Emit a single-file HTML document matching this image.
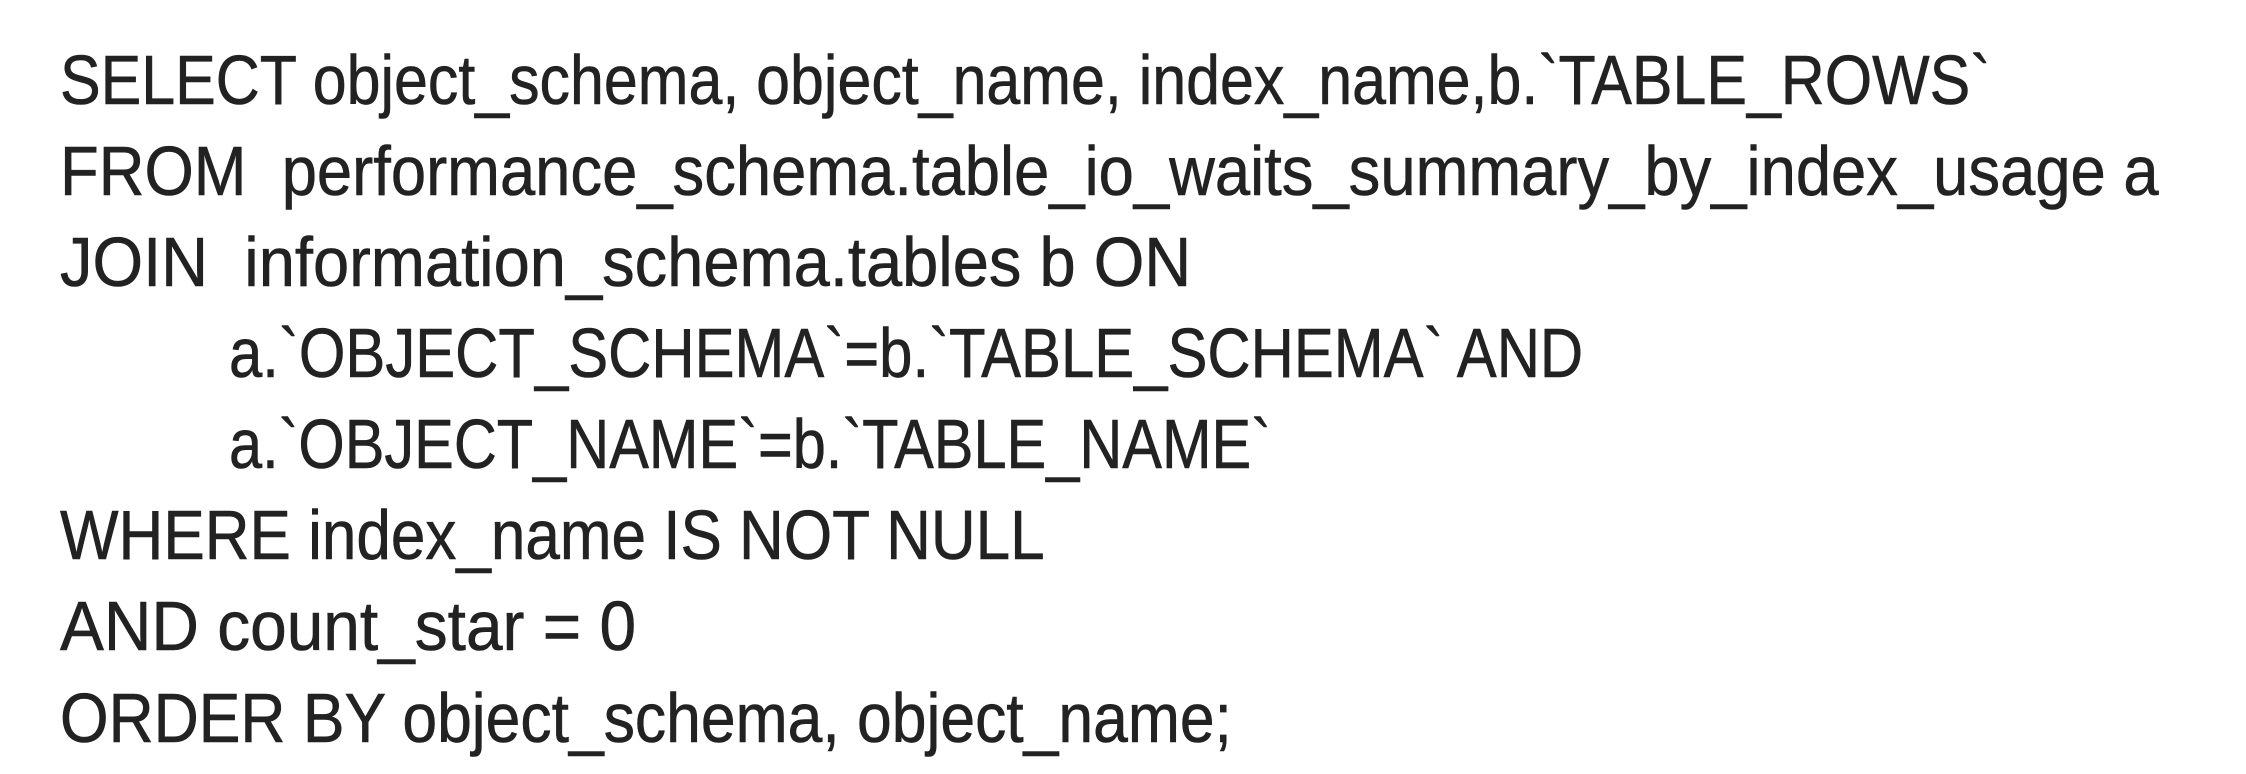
<!DOCTYPE html>
<html><head><meta charset="utf-8"><style>
html,body{margin:0;padding:0;background:#fff;}
body{width:2246px;height:774px;overflow:hidden;position:relative;font-family:"Liberation Sans",sans-serif;color:#222;}
.l{position:absolute;left:60px;font-size:70px;line-height:1;white-space:pre;transform:scaleX(0.905);transform-origin:0 0;-webkit-text-stroke:0.6px #222;}
</style></head><body>
<div class="l" style="top:45px;transform:scaleX(0.87)">SELECT object_schema, object_name, index_name,b.`TABLE_ROWS`</div>
<div class="l" style="top:136px">FROM  performance_schema.table_io_waits_summary_by_index_usage a</div>
<div class="l" style="top:227px;transform:scaleX(0.929)">JOIN  information_schema.tables b ON</div>
<div class="l" style="top:318px;left:229px;transform:scaleX(0.855)">a.`OBJECT_SCHEMA`=b.`TABLE_SCHEMA` AND</div>
<div class="l" style="top:409px;left:229px;transform:scaleX(0.85)">a.`OBJECT_NAME`=b.`TABLE_NAME`</div>
<div class="l" style="top:500px;transform:scaleX(0.886)">WHERE index_name IS NOT NULL</div>
<div class="l" style="top:591px;transform:scaleX(0.94)">AND count_star = 0</div>
<div class="l" style="top:683px;transform:scaleX(0.892)">ORDER BY object_schema, object_name;</div>
</body></html>
